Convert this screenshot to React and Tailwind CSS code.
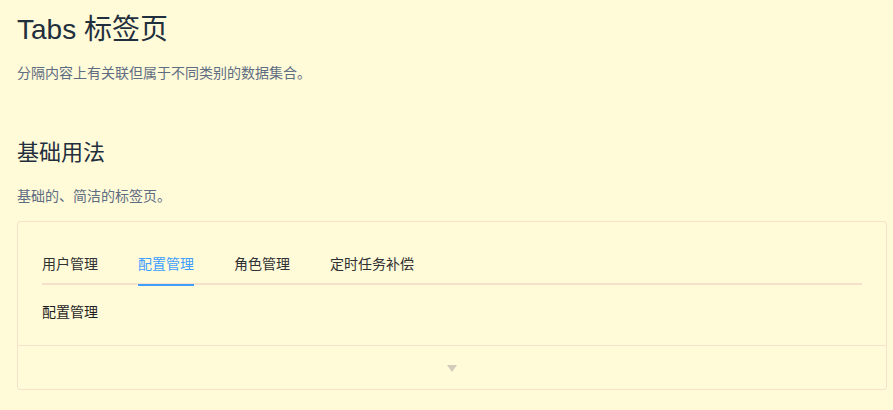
import React, { useState } from "react";

const tabs = ["用户管理", "配置管理", "角色管理", "定时任务补偿"];

export default function App() {
  const [active, setActive] = useState(1);
  return (
    <div
      className="min-h-[410px] w-full bg-[#fffad8] pl-[17px] pr-[6px] pt-[12px] pb-[20px] text-[#1f2f3d]"
      style={{ fontFamily: '"Helvetica Neue", "Liberation Sans", "Noto Sans CJK SC", sans-serif' }}
    >
      <h1 className="m-0 text-[28px] font-normal leading-[36px] text-[#1f2f3d]">Tabs 标签页</h1>
      <p className="mt-[14px] text-[14px] leading-[22px] text-[#5e6d82]">分隔内容上有关联但属于不同类别的数据集合。</p>
      <h2 className="mt-[54px] text-[22px] font-normal leading-[30px] text-[#1f2f3d]">基础用法</h2>
      <p className="mt-[17px] text-[14px] leading-[22px] text-[#5e6d82]">基础的、简洁的标签页。</p>
      <div className="mt-[14px] rounded-[3px] border border-[#f6e2cb]">
        <div className="px-[24px] pt-[23px] pb-[22px]">
          <div className="relative flex h-[40px] items-center border-b-2 border-[#f6e0ca]">
            {tabs.map((t, i) => (
              <button
                key={t}
                onClick={() => setActive(i)}
                className={
                  "relative h-[40px] text-[14px] leading-[40px] " +
                  (i === 0 ? "pr-[20px] " : i === tabs.length - 1 ? "pl-[20px] " : "px-[20px] ") +
                  (i === active ? "text-[#409eff]" : "text-[#303133]")
                }
              >
                {t}
                {i === active && (
                  <span
                    className={
                      "absolute bottom-[-2px] h-[2px] bg-[#409eff] " +
                      (i === 0 ? "left-0 right-[20px]" : i === tabs.length - 1 ? "left-[20px] right-0" : "left-[20px] right-[20px]")
                    }
                  />
                )}
              </button>
            ))}
          </div>
          <div className="mt-[16px] text-[14px] leading-[22px] text-[#1f1f1f]">{tabs[active]}</div>
        </div>
        <div className="flex h-[44px] items-center justify-center border-t border-[#f6e2cb]">
          <svg width="10" height="8" viewBox="0 0 10 8" className="mt-[3px]">
            <path d="M0 0 L10 0 L5 7 Z" fill="#d3cbbb" />
          </svg>
        </div>
      </div>
    </div>
  );
}
